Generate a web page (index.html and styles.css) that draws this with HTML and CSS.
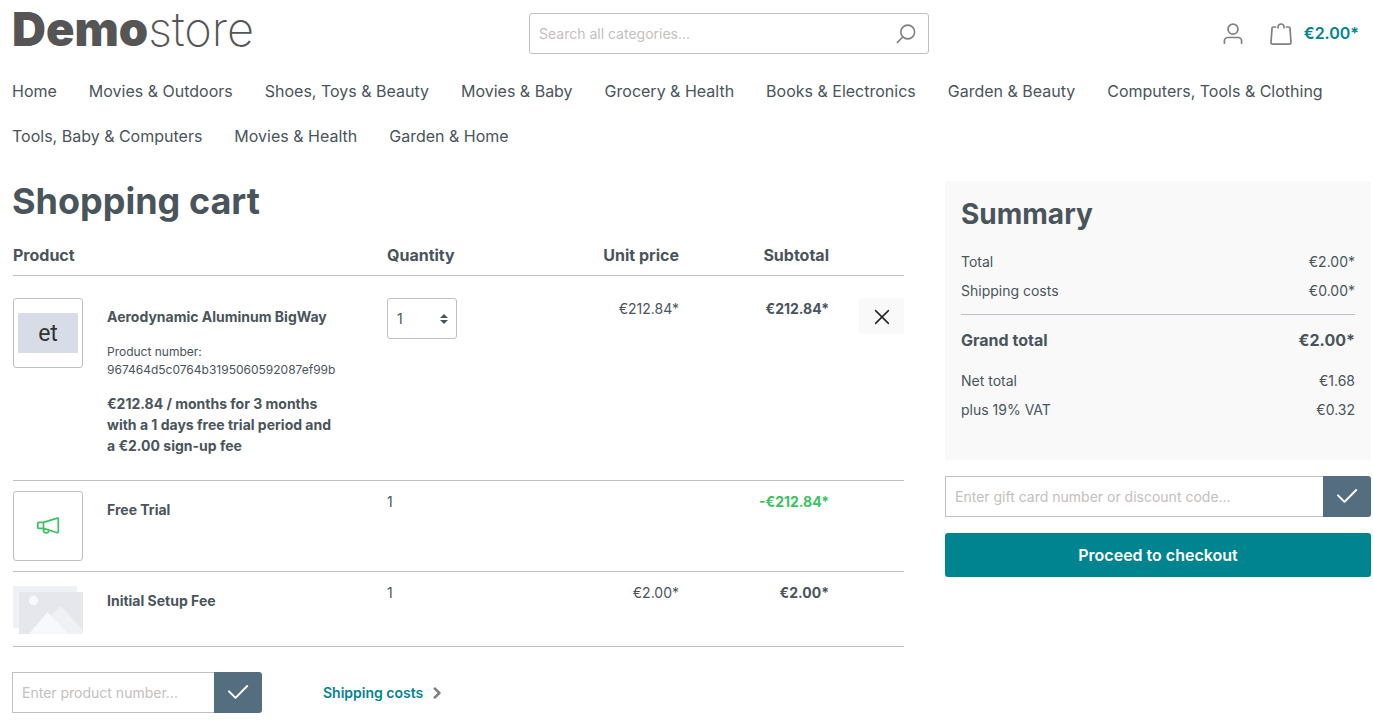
FILE: index.html
```html
<!DOCTYPE html>
<html lang="en">
<head>
<meta charset="utf-8">
<meta name="viewport" content="width=device-width, initial-scale=1">
<title>Shopping cart | Demostore</title>
<link rel="stylesheet" href="styles.css">
</head>
<body>
<div class="container">
  <header class="header">
    <a class="logo" href="#"><span class="logo-strong">Demo</span><span class="logo-light">store</span></a>
    <form class="search" role="search">
      <input class="search-input" type="search" placeholder="Search all categories..." aria-label="Search all categories">
      <button class="search-button" type="button" aria-label="Search">
        <svg width="20" height="20" viewBox="0 0 20 20" fill="none" stroke="#808080" stroke-width="1.6" stroke-linecap="round"><circle cx="11.7" cy="8" r="6.9"/><path d="M6.8 13 1.4 18.4"/></svg>
      </button>
    </form>
    <div class="actions">
      <button class="icon-button" type="button" aria-label="Your account">
        <svg width="20" height="22" viewBox="0 0 20 22" fill="none" stroke="#808080" stroke-width="1.7" stroke-linecap="round"><circle cx="10" cy="6.2" r="5"/><path d="M1.4 20.2v-2.3a3.4 3.4 0 0 1 3.4-3.4h10.4a3.4 3.4 0 0 1 3.4 3.4v2.3"/></svg>
      </button>
      <a class="cart-link" href="#">
        <svg width="22" height="22" viewBox="0 0 22 22" fill="none" stroke="#808080" stroke-width="1.7" stroke-linecap="round" stroke-linejoin="round"><path d="M5.6 4H3.4a1.4 1.4 0 0 0-1.4 1.4L1 19.4A1.6 1.6 0 0 0 2.6 21.1h16.8a1.6 1.6 0 0 0 1.6-1.7L20 5.4A1.4 1.4 0 0 0 18.6 4h-2.2M8 4.8V4a3 3 0 0 1 6 0v.8"/></svg>
        <span>€2.00*</span>
      </a>
    </div>
  </header>

  <nav class="nav" aria-label="Main">
    <a href="#">Home</a>
    <a href="#">Movies &amp; Outdoors</a>
    <a href="#">Shoes, Toys &amp; Beauty</a>
    <a href="#">Movies &amp; Baby</a>
    <a href="#">Grocery &amp; Health</a>
    <a href="#">Books &amp; Electronics</a>
    <a href="#">Garden &amp; Beauty</a>
    <a href="#">Computers, Tools &amp; Clothing</a>
    <a href="#">Tools, Baby &amp; Computers</a>
    <a href="#">Movies &amp; Health</a>
    <a href="#">Garden &amp; Home</a>
  </nav>

  <div class="layout">
    <main>
      <h1 class="title">Shopping cart</h1>
      <table class="cart">
        <colgroup><col><col class="col-quantity"><col class="col-unit"><col class="col-subtotal"><col class="col-remove"></colgroup>
        <thead>
          <tr><th>Product</th><th>Quantity</th><th class="end">Unit price</th><th class="end">Subtotal</th><td></td></tr>
        </thead>
        <tbody>
          <tr class="row-product">
            <td>
              <div class="product">
                <div class="thumb"><div class="thumb-image">et</div></div>
                <div class="details">
                  <a class="name" href="#">Aerodynamic Aluminum BigWay</a>
                  <div class="number">Product number: 967464d5c0764b3195060592087ef99b</div>
                  <div class="plan">€212.84 / months for 3 months with a 1 days free trial period and a €2.00 sign-up fee</div>
                </div>
              </div>
            </td>
            <td>
              <div class="quantity">
                <select class="quantity-select" aria-label="Quantity"><option>1</option><option>2</option><option>3</option></select>
                <svg class="quantity-arrows" width="8" height="10" viewBox="0 0 8 10" fill="#4a545b"><path d="M4 0 8 4H0zM4 10 0 6h8z"/></svg>
              </div>
            </td>
            <td class="end">€212.84*</td>
            <td class="end strong">€212.84*</td>
            <td class="end">
              <button class="remove" type="button" aria-label="Remove product">
                <svg width="16" height="16" viewBox="0 0 16 16" fill="none" stroke="#212529" stroke-width="1.5" stroke-linecap="round"><path d="m1.6 1.6 12.8 12.8M14.4 1.6 1.6 14.4"/></svg>
              </button>
            </td>
          </tr>
          <tr>
            <td>
              <div class="product">
                <div class="thumb">
                  <svg width="24" height="20" viewBox="0 0 24 20" fill="none" stroke="#3cc261" stroke-width="1.7" stroke-linejoin="round" stroke-linecap="round"><path d="M7.5 6.4 21.3 2.1a.8.8 0 0 1 1 .8v13a.8.8 0 0 1-1 .8L7.5 12.4zM7.5 6.4H2.8a1 1 0 0 0-1 1v4a1 1 0 0 0 1 1h4.7M7.5 12.8v1.4a2.7 2.7 0 0 0 5.3.7v-.7"/></svg>
                </div>
                <div class="details"><span class="name">Free Trial</span></div>
              </div>
            </td>
            <td>1</td>
            <td></td>
            <td class="end strong discount">-€212.84*</td>
            <td></td>
          </tr>
          <tr class="row-fee">
            <td>
              <div class="product">
                <svg class="placeholder" width="70" height="48" viewBox="0 0 70 48"><path fill="#f0f1f5" d="M0 0h64v42H0z"/><path fill="#e5e7ec" d="M6 6h64v42H6z"/><circle cx="20.5" cy="14.5" r="4.7" fill="#f7f9fc"/><path fill="#f0f1f5" d="M37.5 30 47.5 20 70 44v4H50z"/><path fill="#f7f9fc" d="M16 48 34.5 26 55 48z"/></svg>
                <div class="details"><span class="name">Initial Setup Fee</span></div>
              </div>
            </td>
            <td>1</td>
            <td class="end">€2.00*</td>
            <td class="end strong">€2.00*</td>
            <td></td>
          </tr>
        </tbody>
      </table>
      <div class="cart-footer">
        <form class="code-form product-form">
          <input class="code-input" type="text" placeholder="Enter product number..." aria-label="Product number">
          <button class="code-button" type="button" aria-label="Add product">
            <svg width="22" height="16" viewBox="0 0 22 16" fill="none" stroke="#fff" stroke-width="2" stroke-linecap="round" stroke-linejoin="round"><path d="m2 7.4 6.5 6.5L20.2 2"/></svg>
          </button>
        </form>
        <a class="shipping" href="#">Shipping costs
          <svg width="8" height="12" viewBox="0 0 8 12" fill="none" stroke="#808080" stroke-width="2.4" stroke-linecap="round" stroke-linejoin="round"><path d="m1.7 1.5 4.8 4.5-4.8 4.5"/></svg>
        </a>
      </div>
    </main>

    <aside>
      <section class="summary">
        <h2 class="summary-title">Summary</h2>
        <dl class="totals">
          <dt>Total</dt><dd>€2.00*</dd>
          <dt>Shipping costs</dt><dd>€0.00*</dd>
          <dt class="grand">Grand total</dt><dd class="grand">€2.00*</dd>
          <dt>Net total</dt><dd>€1.68</dd>
          <dt>plus 19% VAT</dt><dd>€0.32</dd>
        </dl>
      </section>
      <form class="code-form">
        <input class="code-input" type="text" placeholder="Enter gift card number or discount code..." aria-label="Gift card number or discount code">
        <button class="code-button" type="button" aria-label="Apply code">
          <svg width="22" height="16" viewBox="0 0 22 16" fill="none" stroke="#fff" stroke-width="2" stroke-linecap="round" stroke-linejoin="round"><path d="m2 7.4 6.5 6.5L20.2 2"/></svg>
        </button>
      </form>
      <a class="checkout" href="#">Proceed to checkout</a>
    </aside>
  </div>
</div>
</body>
</html>
```

FILE: styles.css
```css
*, *::before, *::after { box-sizing: border-box; }

body {
  margin: 0;
  background: #fff;
  color: #4a545b;
  font: 14px/21px Inter, "Noto Sans", sans-serif;
}

a { color: inherit; text-decoration: none; }
svg { display: block; flex: none; }
button, input, select { font: inherit; color: inherit; }
button { cursor: pointer; }
input::placeholder { color: #c3c0be; opacity: 1; }

.container { padding: 0 2px 0 12px; }

.header {
  display: grid;
  grid-template-columns: 477fr 400px 402fr;
  column-gap: 40px;
  align-items: center;
  height: 67px;
}

.logo { font-size: 47px; line-height: 48px; color: #555; padding-bottom: 10px; }
.logo-strong { font-weight: 900; }
.logo-light { font-weight: 200; }

.search {
  display: flex;
  align-items: center;
  height: 41px;
  border: 1px solid #bcc1c7;
  border-radius: 3px;
}
.search-input {
  flex: 1;
  min-width: 0;
  height: 39px;
  padding: 0 9px;
  border: 0;
  background: none;
  appearance: none;
  outline: 0;
}
.search-button { padding: 0 12px; border: 0; background: none; }

.actions {
  display: flex;
  justify-content: flex-end;
  align-items: center;
  gap: 27px;
  padding-right: 12px;
}
.icon-button { padding: 0; border: 0; background: none; }
.cart-link {
  display: flex;
  align-items: center;
  gap: 12px;
  font-size: 16px;
  font-weight: 600;
  color: #008490;
}

.nav {
  display: flex;
  flex-wrap: wrap;
  gap: 21px 32px;
  padding: 12px 0 32px;
  font-size: 16px;
  line-height: 24px;
}

.layout {
  display: grid;
  grid-template-columns: minmax(0, 893fr) minmax(0, 426fr);
  gap: 40px;
  align-items: start;
}
.layout aside { padding-top: 1px; }

.title { margin: 0; font-size: 36px; line-height: 43px; font-weight: 700; }

.cart {
  width: calc(100% - 2px);
  margin: 12px 1px 0;
  border-collapse: separate;
  border-spacing: 0;
  table-layout: fixed;
}
.col-quantity { width: 150px; }
.col-unit { width: 142px; }
.col-subtotal { width: 150px; }
.col-remove { width: 75px; }
.cart th, .cart td {
  padding: 10px 0;
  border-bottom: 1px solid #bcc1c7;
  text-align: left;
  vertical-align: top;
}
.cart th { padding: 8px 0; font-size: 16px; line-height: 24px; font-weight: 700; }
.cart thead td { padding: 0; }
.cart .end { text-align: right; }
.cart .row-product td { padding: 22px 0 24px; }
.cart .row-fee .placeholder { margin: 4px 0 2px; }
.strong { font-weight: 700; }
.discount { color: #3cc261; }

.product { display: flex; align-items: flex-start; gap: 24px; padding-right: 48px; }
.thumb {
  display: flex;
  align-items: center;
  justify-content: center;
  flex: none;
  width: 70px;
  height: 70px;
  border: 1px solid #bcc1c7;
  border-radius: 3px;
}
.thumb-image {
  width: 60px;
  height: 40px;
  background: #d8dce6;
  color: #333;
  font: 23px/41px Roboto, sans-serif;
  text-align: center;
}
.details { padding-top: 8px; }
.name { font-weight: 700; }
.number { padding: 16px 0 14px; font-size: 12px; line-height: 18px; }
.plan { font-weight: 700; }

.quantity { position: relative; width: 70px; }
.quantity-select {
  display: block;
  width: 100%;
  height: 41px;
  padding: 0 9px;
  border: 1px solid #bcc1c7;
  border-radius: 3px;
  background: #fff;
  appearance: none;
}
.quantity-arrows { position: absolute; top: 16px; right: 9px; pointer-events: none; }

.remove {
  display: inline-flex;
  align-items: center;
  justify-content: center;
  width: 45px;
  height: 36px;
  padding: 2px 0 0;
  border: 0;
  border-radius: 3px;
  background: #f9f9f9;
}

.cart-footer { display: flex; align-items: center; gap: 61px; margin-top: 25px; }
.code-form { display: flex; }
.product-form { width: 250px; }
.code-input {
  flex: 1;
  min-width: 0;
  height: 41px;
  padding: 0 9px;
  border: 1px solid #bcc1c7;
  border-right: 0;
  border-radius: 0;
  background: #fff;
}
.code-button {
  display: flex;
  align-items: center;
  justify-content: center;
  width: 48px;
  height: 41px;
  padding: 0 0 2px;
  border: 0;
  border-radius: 0 3px 3px 0;
  background: #546e7f;
}
.shipping { display: flex; align-items: center; gap: 10px; font-weight: 600; color: #008490; }

.summary { margin-bottom: 16px; padding: 16px 16px 36px; background: #f9f9f9; }
.summary-title { margin: 0; font-size: 28px; line-height: 34px; font-weight: 700; }
.totals { display: grid; grid-template-columns: 1fr auto; margin: 16px 0 0; }
.totals dt, .totals dd { margin: 0; padding: 4px 0; }
.totals dd { text-align: right; }
.totals .grand {
  margin: 9px 0 6px;
  padding: 13px 0 8px;
  border-top: 1px solid #bcc1c7;
  font-size: 16px;
  line-height: 24px;
  font-weight: 700;
}

.checkout {
  display: block;
  margin-top: 16px;
  padding: 10px;
  border-radius: 3px;
  background: #008490;
  color: #fff;
  font-size: 16px;
  line-height: 24px;
  font-weight: 600;
  text-align: center;
}
```
